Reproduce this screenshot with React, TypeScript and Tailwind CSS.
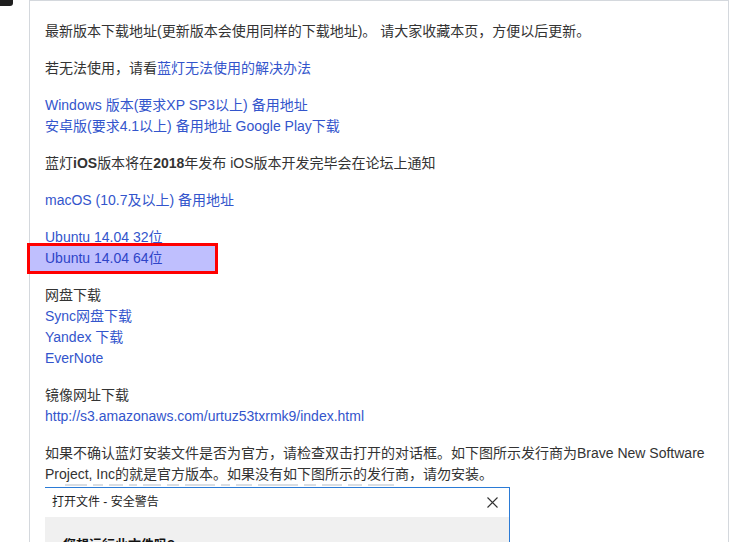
import React from 'react'

const link = 'text-[#3355cc]'

function Line({ children, blue }: { children: React.ReactNode; blue?: boolean }) {
  return <div className={blue ? link : ''}>{children}</div>
}

export default function App() {
  return (
    <div
      className="w-[732px] h-[542px] overflow-hidden bg-white flex text-[14px] leading-[21px] text-[#333]"
      style={{ fontFamily: '"Liberation Sans", "Noto Sans CJK SC", sans-serif' }}
    >
      {/* left gutter with floating tab */}
      <div className="w-[29px] shrink-0">
        <div className="w-[13px] h-[6px] bg-[#1f1f1f] rounded-br-[3px]" />
      </div>

      {/* card */}
      <div className="w-[700px] shrink-0 border-x border-[#d4d8dd] flex flex-col">
        <div className="h-[7px] bg-[#f3f6f9] border-b border-[#d4d8dd]" />
        <div className="pl-[15px] pr-[20px] pt-[20px]">
          <p className="mb-4">最新版本下载地址(更新版本会使用同样的下载地址)。 请大家收藏本页，方便以后更新。</p>
          <p className="mb-4">
            若无法使用，请看<span className={link}>蓝灯无法使用的解决办法</span>
          </p>
          <div className="mb-4">
            <Line blue>Windows 版本(要求XP SP3以上) 备用地址</Line>
            <Line blue>安卓版(要求4.1以上) 备用地址 Google Play下载</Line>
          </div>
          <p className="mb-4">
            蓝灯<b>iOS</b>版本将在<b>2018</b>年发布 iOS版本开发完毕会在论坛上通知
          </p>
          <p className={`mb-4 ${link}`}>macOS (10.7及以上) 备用地址</p>
          <div className="mb-4">
            <Line blue>Ubuntu 14.04 32位</Line>
            <div className="relative">
              {/* annotation box */}
              <span className="absolute -left-[18px] -top-[5px] w-[191px] h-[31px] border-[3px] border-[#ff0000] bg-[#bfbffe]" />
              <span className="relative text-[#2e44c8]">Ubuntu 14.04 64位</span>
            </div>
          </div>
          <div className="mb-4">
            <Line>网盘下载</Line>
            <Line blue>Sync网盘下载</Line>
            <Line blue>Yandex 下载</Line>
            <Line blue>EverNote</Line>
          </div>
          <div className="mb-4">
            <Line>镜像网址下载</Line>
            <Line blue>http://s3.amazonaws.com/urtuz53txrmk9/index.html</Line>
          </div>
          <p>
            如果不确认蓝灯安装文件是否为官方，请检查双击打开的对话框。如下图所示发行商为Brave New Software
            Project, Inc的就是官方版本。如果没有如下图所示的发行商，请勿安装。
          </p>

          {/* screenshot of the security dialog */}
          <div className="w-[465px] mt-[-3px]">
            <div className="h-[5px] flex items-center gap-[6px] pl-[20px] pr-[14px]">
              {[22, 10, 14, 8, 18, 12, 30, 9, 16, 40, 12, 20, 14, 26].map((w, i) => (
                <span key={i} className="h-[2px] bg-[#b4bcc6] opacity-50" style={{ width: w }} />
              ))}
            </div>
            <div className="border-t border-r border-[#2b7bd6]">
              <div className="h-[29px] bg-white flex items-center justify-between pl-[7px] pr-[11px] text-[12px]">
                <span className="text-[#222]">打开文件 - 安全警告</span>
                <svg width="11" height="11" viewBox="0 0 11 11" fill="none" stroke="#333" strokeWidth="1.1">
                  <path d="M0.5 0.5 L10.5 10.5 M10.5 0.5 L0.5 10.5" />
                </svg>
              </div>
              <div className="h-[40px] bg-[#f0f0f0] pl-[18px] pt-[17px] text-[13px] font-bold text-[#111]">
                您想运行此文件吗?
              </div>
            </div>
          </div>
        </div>
      </div>
    </div>
  )
}
